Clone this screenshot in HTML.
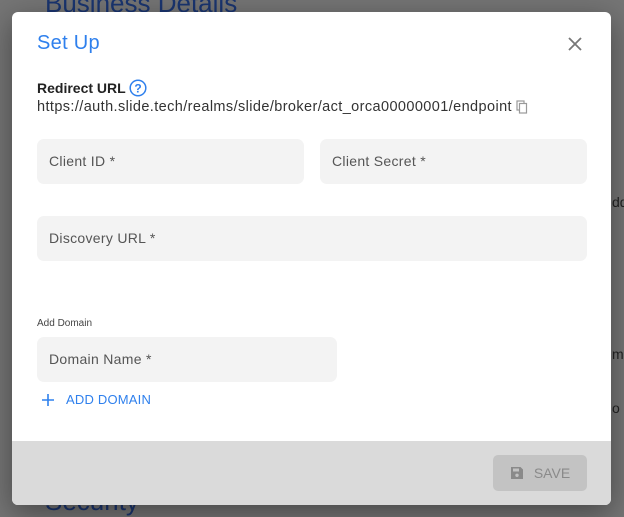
<!DOCTYPE html>
<html><head><meta charset="utf-8"><style>
*{box-sizing:border-box;margin:0;padding:0}
body{width:624px;height:517px;overflow:hidden;background:#757575;font-family:"Liberation Sans",sans-serif;position:relative}
.bg{position:absolute;color:#1a3570}
.modal{position:absolute;left:12px;top:12px;width:599px;height:493px;background:#fff;border-radius:6px;overflow:hidden;box-shadow:0 8px 30px rgba(0,0,0,.4)}
.title{position:absolute;left:25px;top:20px;font-size:20px;color:#2f80ed;letter-spacing:.3px}
.close{position:absolute;left:555px;top:24px}
.lbl{position:absolute;left:25px;top:67px;font-size:14px;font-weight:bold;color:#222}
.url{position:absolute;left:25px;top:87px;font-size:14.5px;color:#333;letter-spacing:.4px;white-space:nowrap}
.f{position:absolute;background:#f3f3f3;border-radius:7px;font-size:14px;color:#555;padding-left:12px;line-height:45px;height:45px;letter-spacing:.3px}
.small{position:absolute;left:25px;top:306px;font-size:10px;color:#444}
.add{position:absolute;left:30px;top:380px;font-size:13px;color:#2f80ed;display:flex;align-items:center;gap:12px;letter-spacing:.2px}
.foot{position:absolute;left:0;top:429px;width:599px;height:64px;background:#dadada}
.save{position:absolute;left:481px;top:14px;width:94px;height:36px;background:#c3c3c3;border-radius:5px;color:#8a8a8a;font-size:14px;display:flex;align-items:center;justify-content:center;gap:10px}
</style></head><body>
<div class="bg" style="left:45px;top:-12px;font-size:26px">Business Details</div>
<div class="bg" style="left:45px;top:486px;font-size:26px">Security</div>
<div class="bg" style="left:612px;top:194px;font-size:14px;color:#222">dd</div>
<div class="bg" style="left:612px;top:346px;font-size:14px;color:#222">me</div>
<div class="bg" style="left:612px;top:400px;font-size:14px;color:#222">o</div>
<div class="modal">
<div class="title">Set Up</div>
<svg class="close" width="16" height="16" viewBox="0 0 16 16"><path d="M2 2L14 14M14 2L2 14" stroke="#777" stroke-width="1.8"/></svg>
<div class="lbl">Redirect URL <svg style="vertical-align:-4px" width="18" height="18" viewBox="0 0 18 18"><circle cx="9" cy="9" r="7.8" fill="none" stroke="#2f80ed" stroke-width="1.5"/><text x="9" y="13.5" font-size="12" text-anchor="middle" fill="#2f80ed" font-family="Liberation Sans">?</text></svg></div>
<div class="url">https://auth.slide.tech/realms/slide/broker/act_orca00000001/endpoint <svg style="vertical-align:-3px" width="12" height="14" viewBox="0 0 12 14"><rect x="1" y="1" width="7" height="9" fill="none" stroke="#999" stroke-width="1.2"/><rect x="3.5" y="3.5" width="7" height="9.5" fill="#fff" stroke="#999" stroke-width="1.2"/></svg></div>
<div class="f" style="left:25px;top:127px;width:267px">Client ID *</div>
<div class="f" style="left:308px;top:127px;width:267px">Client Secret *</div>
<div class="f" style="left:25px;top:204px;width:550px">Discovery URL *</div>
<div class="small">Add Domain</div>
<div class="f" style="left:25px;top:325px;width:300px">Domain Name *</div>
<div class="add"><svg width="12" height="12" viewBox="0 0 12 12"><path d="M6 0V12M0 6H12" stroke="#2f80ed" stroke-width="1.6"/></svg>ADD DOMAIN</div>
<div class="foot"><div class="save"><svg width="14" height="14" viewBox="0 0 14 14"><path d="M1 1H10.5L13 3.5V13H1Z" fill="#8a8a8a"/><rect x="3" y="2.5" width="6" height="3" fill="#c3c3c3"/><circle cx="7" cy="9.3" r="1.7" fill="#c3c3c3"/></svg>SAVE</div></div>
</div>
</body></html>
